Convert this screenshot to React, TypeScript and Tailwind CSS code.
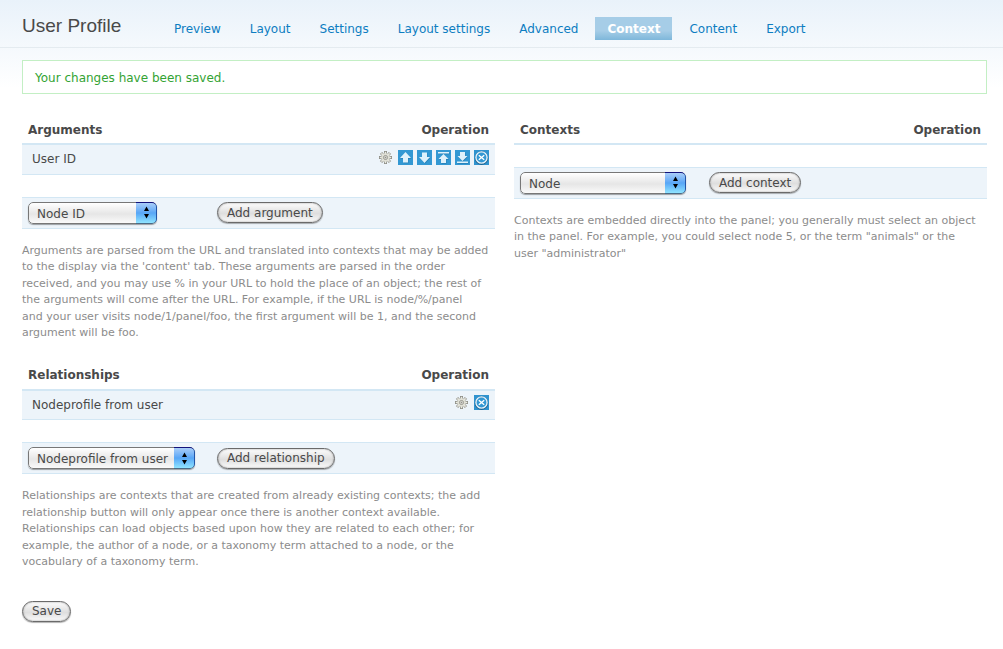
import React from 'react';

const tabs = ['Preview', 'Layout', 'Settings', 'Layout settings', 'Advanced', 'Context', 'Content', 'Export'];

const gearTeeth = [0, 45, 90, 135, 180, 225, 270, 315];

const GearIcon = () => (
  <svg width="13" height="13" viewBox="0 0 13 13" aria-hidden="true">
    {gearTeeth.map((angle) => (
      <rect
        key={angle}
        x="5.4"
        y="0.4"
        width="2.2"
        height="3"
        fill="#ecece4"
        stroke="#8c8c84"
        strokeWidth="0.8"
        transform={`rotate(${angle} 6.5 6.5)`}
      />
    ))}
    <circle cx="6.5" cy="6.5" r="4.2" fill="#dfdfd5" />
    <circle cx="6.5" cy="6.5" r="2" fill="#f4f4ee" stroke="#8c8c84" strokeWidth="0.9" />
    <path d="M6.5 5.5v2M5.5 6.5h2" stroke="#8c8c84" strokeWidth="0.8" />
  </svg>
);

const arrowPaths = {
  up: 'M7.5 2L13 8H10v4.5H5V8H2z',
  down: 'M7.5 13L2 7h3V2.5h5V7h3z',
  top: 'M2 2h11v1.5H2zM7.5 4L12.5 9H10v4H5V9H2.5z',
  bottom: 'M2 11.5h11V13H2zM7.5 11L2.5 6H5V2h5v4h2.5z',
};

const ArrowIcon = ({ direction }: { direction: keyof typeof arrowPaths }) => (
  <svg width="15" height="15" viewBox="0 0 15 15" aria-hidden="true">
    <rect width="15" height="15" fill="#3398d3" />
    <path d={arrowPaths[direction]} transform="translate(0.5 0.7)" fill="#1f6fa3" opacity="0.6" />
    <path d={arrowPaths[direction]} fill="#dff1fb" />
  </svg>
);

const RemoveIcon = () => (
  <svg width="15" height="15" viewBox="0 0 15 15" aria-hidden="true">
    <rect width="15" height="15" fill="#2f93cf" />
    <circle cx="7.5" cy="8" r="5.8" fill="none" stroke="#17557f" strokeWidth="1.8" />
    <circle cx="7.5" cy="7.5" r="5.6" fill="#3398d3" stroke="#e4f3fc" strokeWidth="1.4" />
    <path d="M4.8 5.3l5.4 4.4M10.2 5.3L4.8 9.7" stroke="#fff" strokeWidth="1.4" />
  </svg>
);

const IconButton = ({ label, children }: { label: string; children: React.ReactNode }) => (
  <button type="button" aria-label={label} className="block cursor-pointer">
    {children}
  </button>
);

const Button = ({ type = 'button', children }: { type?: 'button' | 'submit'; children: React.ReactNode }) => (
  <button
    type={type}
    className="block h-[21px] whitespace-nowrap rounded-full border border-[#6a6a6a] bg-linear-to-b from-[#fdfdfd] from-0% via-[#dedede] via-55% to-[#fbfbfb] px-[9px] leading-[18px] shadow-[0_1px_1px_rgba(0,0,0,0.3),inset_0_0_2px_rgba(0,0,0,0.4)]"
  >
    {children}
  </button>
);

const Select = ({ label, options, width }: { label: string; options: string[]; width: string }) => (
  <div className={`relative h-[22px] overflow-hidden rounded-[5px] shadow-[0_1px_1px_rgba(0,0,0,0.35)] ${width}`}>
    <select
      aria-label={label}
      className="block h-full w-full appearance-none rounded-[5px] border border-[#777] bg-linear-to-b from-[#fff] from-0% via-[#e6e6e6] via-55% to-[#fafafa] pt-0.5 pl-2 pr-6 leading-[18px]"
    >
      {options.map((option) => (
        <option key={option}>{option}</option>
      ))}
    </select>
    <span className="pointer-events-none absolute inset-y-0 right-0 flex w-[21px] items-center justify-center rounded-r-[5px] border-y border-r border-t-[#12127c] border-r-[#2255a8] border-b-[#4a6a86] bg-linear-to-b from-[#a9cdf8] from-0% via-[#58a6f6] via-50% to-[#8fe4ff]">
      <svg width="7" height="13" viewBox="0 0 7 13" aria-hidden="true">
        <path d="M3.5 0.5L6 5H1zM3.5 12.5L1 8h5z" fill="#000" />
      </svg>
    </span>
  </div>
);

interface Item {
  name: string;
  sortable?: boolean;
}

interface ContextTableProps {
  title: string;
  items?: Item[];
  options: string[];
  selectWidth: string;
  action: string;
  help: string;
}

const ContextTable = ({ title, items = [], options, selectWidth, action, help }: ContextTableProps) => (
  <section>
    <table className="w-full table-fixed border-collapse">
      <thead>
        <tr className="border-b-2 border-[#d3e7f4]">
          <th className="h-[30px] w-[195px] px-1.5 pt-0.5 text-left">{title}</th>
          <th className="px-1.5 pt-0.5 text-right">Operation</th>
        </tr>
      </thead>
      <tbody>
        {items.map((item) => (
          <tr key={item.name} className="border-b border-[#d3e7f4] bg-[#edf4fa]">
            <td className="h-[30px] pl-2.5">{item.name}</td>
            <td className="px-1.5 pb-1">
              <div className="flex items-center justify-end gap-1">
                <span className="mr-0.5 flex">
                  <IconButton label={`Configure ${item.name}`}><GearIcon /></IconButton>
                </span>
                {item.sortable && (
                  <>
                    <IconButton label="Move up"><ArrowIcon direction="up" /></IconButton>
                    <IconButton label="Move down"><ArrowIcon direction="down" /></IconButton>
                    <IconButton label="Move to top"><ArrowIcon direction="top" /></IconButton>
                    <IconButton label="Move to bottom"><ArrowIcon direction="bottom" /></IconButton>
                  </>
                )}
                <IconButton label={`Remove ${item.name}`}><RemoveIcon /></IconButton>
              </div>
            </td>
          </tr>
        ))}
        <tr>
          <td colSpan={2} className="h-[23px]" />
        </tr>
        <tr className="border-y border-[#d3e7f4] bg-[#edf4fa]">
          <td className="h-[31px] pl-1.5">
            <Select label={title} options={options} width={selectWidth} />
          </td>
          <td>
            <Button>{action}</Button>
          </td>
        </tr>
      </tbody>
    </table>
    <p className="mt-[14px] pr-[5px] text-[11px] leading-normal text-[#8c8c8c]">{help}</p>
  </section>
);

const App = () => {
  return (
    <div className="min-h-screen bg-linear-to-b from-[#e9f2fa] from-0% to-white to-[88px] font-['DejaVu_Sans','Verdana',sans-serif] text-[12px] text-[#494949]">
      <header className="flex h-12 items-start border-b border-[#e4ebf0] pl-[22px]">
        <h1 className="w-[140px] pt-3 font-['Liberation_Sans',Arial,sans-serif] text-[19px] leading-7">User Profile</h1>
        <nav className="flex gap-[5px] pt-[17px]">
          {tabs.map((tab) => (
            <a
              key={tab}
              href="#"
              aria-current={tab === 'Context' ? 'page' : undefined}
              className={
                tab === 'Context'
                  ? 'bg-linear-to-b from-[#a6cde7] from-60% to-[#7eb7da] px-3 pt-px font-bold leading-[22px] text-white'
                  : 'px-3 pt-px leading-[22px] text-[#0d7dc1]'
              }
            >
              {tab}
            </a>
          ))}
        </nav>
      </header>

      <main className="px-4 pl-[22px] pt-3">
        <div role="status" className="border border-[#c3efc4] bg-white px-3 pt-[9px] pb-[7px] leading-4 text-[#33a333]">
          Your changes have been saved.
        </div>

        <form onSubmit={(e) => e.preventDefault()}>
          <div className="mt-5 grid grid-cols-2 gap-[19px]">
            <div className="space-y-[18px]">
              <ContextTable
                title="Arguments"
                items={[{ name: 'User ID', sortable: true }]}
                options={['Node ID']}
                selectWidth="w-[129px]"
                action="Add argument"
                help={"Arguments are parsed from the URL and translated into contexts that may be added to the display via the 'content' tab. These arguments are parsed in the order received, and you may use % in your URL to hold the place of an object; the rest of the arguments will come after the URL. For example, if the URL is node/%/panel and\u00a0your user visits node/1/panel/foo, the first argument will be 1, and the second argument will be foo."}
              />
              <ContextTable
                title="Relationships"
                items={[{ name: 'Nodeprofile from user' }]}
                options={['Nodeprofile from user']}
                selectWidth="w-[167px]"
                action="Add relationship"
                help="Relationships are contexts that are created from already existing contexts; the add relationship button will only appear once there is another context available. Relationships can load objects based upon how they are related to each other; for example, the author of a node, or a taxonomy term attached to a node, or the vocabulary of a taxonomy term."
              />
            </div>
            <ContextTable
              title="Contexts"
              options={['Node']}
              selectWidth="w-[166px]"
              action="Add context"
              help={'Contexts are embedded directly into the panel; you generally must select an object in the panel. For example, you could select node 5, or the term "animals" or the user "administrator"'}
            />
          </div>
          <div className="mt-[30px]">
            <Button type="submit">Save</Button>
          </div>
        </form>
      </main>
    </div>
  );
};

export default App;
